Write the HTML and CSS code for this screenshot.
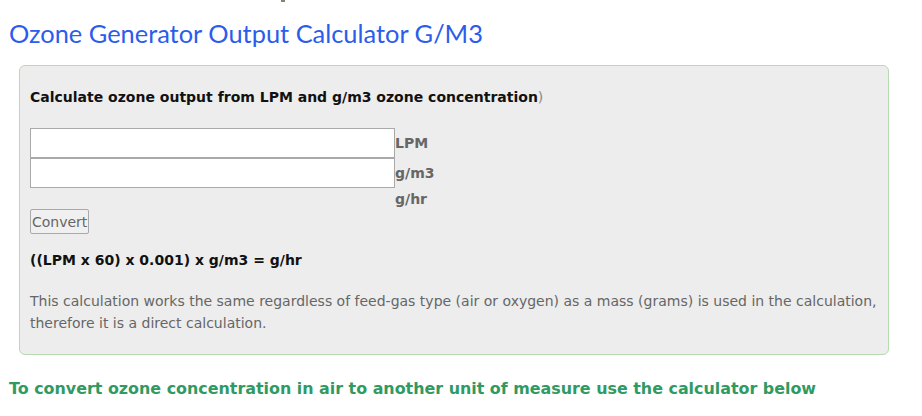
FILE: index.html
```html
<!DOCTYPE html>
<html>
<head>
	<meta charset="utf-8">
	<title>Ozone Generator Output Calculator G/M3</title>
	<link rel="stylesheet" href="styles.css">
</head>
<body>

<div class="top-mark"></div>

<h2 class="page-title">Ozone Generator Output Calculator G/M3</h2>

<div class="calc-box">
	<p class="calc-title"><strong>Calculate ozone output from LPM and g/m3 ozone concentration</strong>)</p>

	<div class="calc-fields">
		<input type="text" class="calc-input">
		<span class="calc-unit">LPM</span>
		<input type="text" class="calc-input">
		<span class="calc-unit">g/m3</span>
		<span></span>
		<span class="calc-unit">g/hr</span>
	</div>

	<button class="calc-button">Convert</button>

	<p class="calc-formula">((LPM x 60) x 0.001) x g/m3 = g/hr</p>

	<p class="calc-note">This calculation works the same regardless of feed-gas type (air or oxygen) as a mass (grams) is used in the calculation, therefore it is a direct calculation.</p>
</div>

<h3 class="next-title">To convert ozone concentration in air to another unit of measure use the calculator below</h3>

</body>
</html>
```

FILE: styles.css
```css
* {
	box-sizing: border-box;
}

body {
	margin: 0;
	padding: 0 9px;
	font-family: "DejaVu Sans", Verdana, sans-serif;
	font-size: 14px;
	color: #666;
	background: #fff;
}

/* bit of something cut off above the view */
.top-mark {
	position: absolute;
	top: 0;
	left: 281px;
	width: 4px;
	height: 2px;
	background: #8a7f70;
}

.page-title {
	margin: 0;
	padding-top: 18px;
	font-family: Lato, "Open Sans", sans-serif;
	font-weight: normal;
	font-size: 25.4px;
	line-height: 30px;
	color: #2b5cec;
}

/* Calculator panel */
.calc-box {
	margin: 17px 24px 0 10px;
	padding: 20px 10px 20px;
	background: #ededed;
	border: 1px solid #b8dab0;
	border-radius: 6px;
}

.calc-title {
	margin: 0 0 20px;
	line-height: 22px;
	color: #8a8a8a;
}

.calc-title strong {
	color: #111;
}

.calc-fields {
	display: grid;
	grid-template-columns: 365px auto;
	grid-template-rows: 30px 30px 21px;
	align-items: center;
}

.calc-input {
	width: 365px;
	height: 30px;
	margin: 0;
	border: 1px solid #a9a9a9;
	background: #fff;
	font: inherit;
}

.calc-unit {
	font-weight: bold;
	color: #666;
}

.calc-button {
	display: block;
	height: 25px;
	padding: 0 1px;
	font-family: "DejaVu Sans", Verdana, sans-serif;
	font-size: 14px;
	color: #666;
	background: #f0f0f0;
	border: 1px solid #a9a9a9;
	border-radius: 2px;
}

.calc-formula {
	margin: 15px 0 0;
	font-weight: bold;
	line-height: 22px;
	color: #111;
}

.calc-note {
	margin: 19px 0 0;
	line-height: 22px;
	color: #666;
}

.next-title {
	margin: 23px 0 0;
	font-size: 15.9px;
	line-height: 22px;
	color: #2f9a62;
}
```
